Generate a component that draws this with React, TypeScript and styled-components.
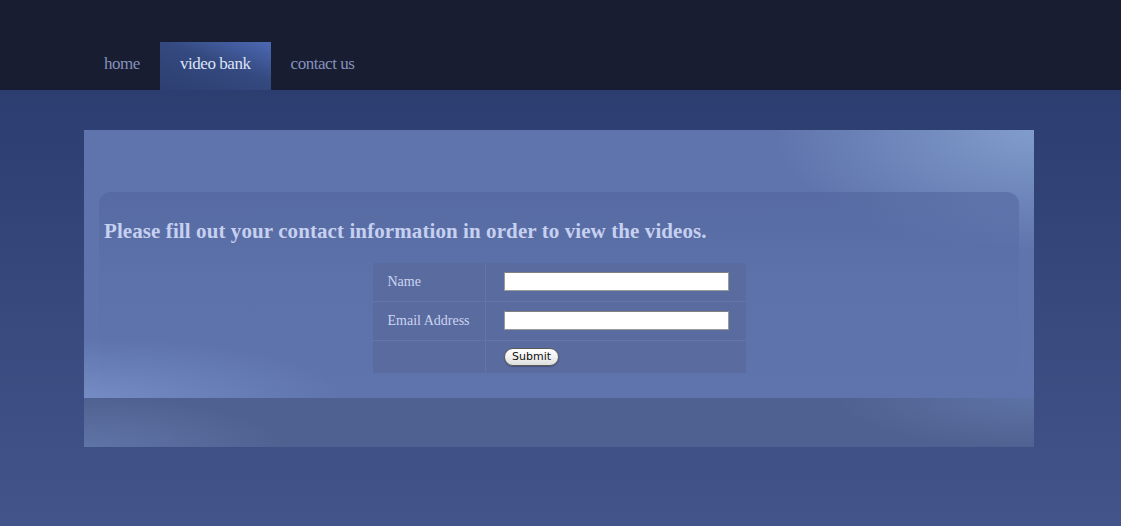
import React from "react";
import styled, { createGlobalStyle } from "styled-components";

const Global = createGlobalStyle`
  html, body { margin: 0; padding: 0; }
  body {
    background: #42548a;
    font-family: "Liberation Serif", "Times New Roman", serif;
  }
`;

const Page = styled.div`
  min-height: 526px;
  display: flex;
  flex-direction: column;
  background: linear-gradient(180deg, #2c3e70 90px, #42548a 526px);
`;

const Header = styled.header`
  height: 90px;
  background: #181d31;
  display: flex;
  align-items: flex-end;
  padding-left: 84px;
  box-sizing: border-box;
`;

const Nav = styled.nav`
  display: flex;
  height: 48px;
`;

const NavItem = styled.a<{ $active?: boolean }>`
  display: flex;
  align-items: center;
  padding: 0 20px 5px;
  font-family: "Liberation Serif", "Times New Roman", serif;
  font-size: 17px;
  letter-spacing: -0.45px;
  color: ${(p) => (p.$active ? "#dde4f8" : "#8592bd")};
  text-decoration: none;
  background: ${(p) =>
    p.$active
      ? "linear-gradient(200deg, #4c69b3 0%, #34497f 45%, #2d3f72 100%)"
      : "transparent"};
`;

const Main = styled.main`
  padding: 40px 87px 0 84px;
`;

const Panel = styled.section`
  width: 950px;
  display: flex;
  flex-direction: column;
`;

const PanelBody = styled.div`
  height: 268px;
  box-sizing: border-box;
  padding: 62px 15px 0;
  background:
    radial-gradient(ellipse 260px 120px at 100% 0%, rgba(140, 170, 215, 0.75), rgba(140, 170, 215, 0) 100%),
    radial-gradient(ellipse 260px 60px at 0% 100%, rgba(125, 150, 205, 0.7), rgba(125, 150, 205, 0) 100%),
    #5f74ac;
`;

const InnerBox = styled.div`
  height: 206px;
  box-sizing: border-box;
  padding: 27px 5px 0;
  border-radius: 12px 12px 0 0;
  background: linear-gradient(180deg, rgba(80, 98, 155, 0.55) 0%, rgba(80, 98, 155, 0.15) 40%, rgba(80, 98, 155, 0) 100%);
  display: flex;
  flex-direction: column;
  align-items: stretch;
`;

const Heading = styled.h2`
  margin: 0 0 20px;
  font-family: "Liberation Serif", "Times New Roman", serif;
  font-weight: bold;
  font-size: 21px;
  letter-spacing: 0.09px;
  line-height: 24px;
  color: #c6d0f0;
`;

const Form = styled.table`
  align-self: center;
  border-collapse: collapse;
  background: #5a6ba0;
`;

const Row = styled.tr`
  & + & td {
    border-top: 1px solid #6375aa;
  }
`;

const Label = styled.td<{ $h: number }>`
  width: 113px;
  height: ${(p) => p.$h}px;
  box-sizing: border-box;
  padding: 0 0 0 15px;
  border-right: 1px solid #6375aa;
  font-family: "Liberation Serif", "Times New Roman", serif;
  font-size: 14px;
  color: #ccd5f0;
  vertical-align: middle;
`;

const Field = styled.td`
  width: 260px;
  padding: 0 0 0 18px;
  box-sizing: border-box;
  vertical-align: middle;
`;

const Input = styled.input`
  display: block;
  width: 225px;
  height: 19px;
  box-sizing: border-box;
  margin: 0;
  border: 1px solid #9a9a9a;
  border-top-color: #808080;
  background: #fff;
  padding: 0 3px;
`;

const Submit = styled.button`
  display: block;
  width: 55px;
  height: 18px;
  margin: 0;
  padding: 0 0 1px;
  border: 1px solid #5a5a5a;
  border-radius: 9px;
  background: linear-gradient(180deg, #ffffff 0%, #f2f2f2 50%, #dedede 100%);
  box-shadow: 0 1px 1px rgba(0, 0, 0, 0.25);
  font-family: "DejaVu Sans", "Lucida Grande", sans-serif;
  font-size: 11px;
  color: #111;
`;

const PanelFoot = styled.div`
  height: 49px;
  background:
    radial-gradient(ellipse 200px 50px at 0% 100%, rgba(115, 140, 195, 0.45), rgba(115, 140, 195, 0) 100%),
    radial-gradient(ellipse 200px 50px at 100% 0%, rgba(110, 135, 190, 0.45), rgba(110, 135, 190, 0) 100%),
    #4f6190;
`;

export default function App() {
  return (
    <>
      <Global />
      <Page>
        <Header>
          <Nav>
            <NavItem href="#">home</NavItem>
            <NavItem href="#" $active>
              video bank
            </NavItem>
            <NavItem href="#">contact us</NavItem>
          </Nav>
        </Header>
        <Main>
          <Panel>
            <PanelBody>
              <InnerBox>
                <Heading>Please fill out your contact information in order to view the videos.</Heading>
                <Form>
                  <tbody>
                    <Row>
                      <Label $h={38}>Name</Label>
                      <Field>
                        <Input type="text" />
                      </Field>
                    </Row>
                    <Row>
                      <Label $h={39}>Email Address</Label>
                      <Field>
                        <Input type="text" />
                      </Field>
                    </Row>
                    <Row>
                      <Label $h={33}></Label>
                      <Field>
                        <Submit type="button">Submit</Submit>
                      </Field>
                    </Row>
                  </tbody>
                </Form>
              </InnerBox>
            </PanelBody>
            <PanelFoot />
          </Panel>
        </Main>
      </Page>
    </>
  );
}
